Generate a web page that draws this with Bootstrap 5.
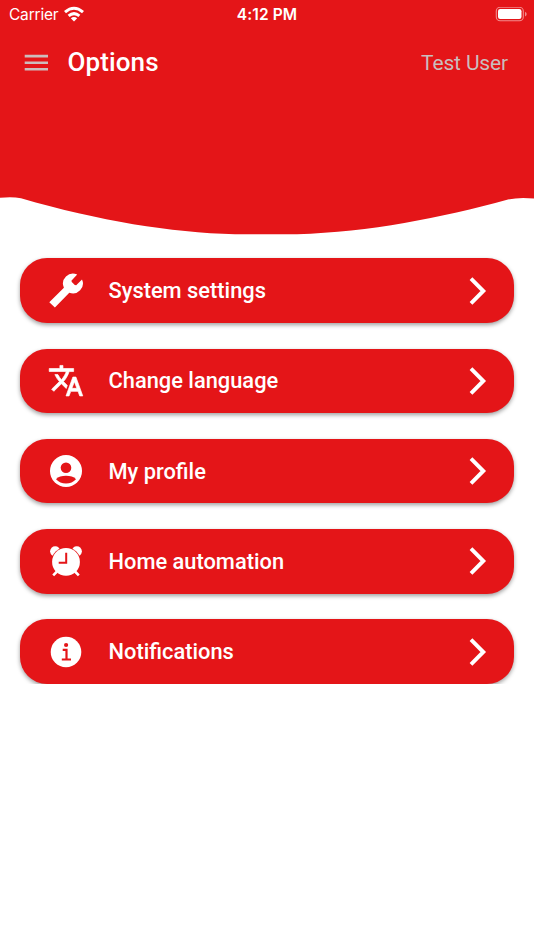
<!DOCTYPE html>
<html lang="en">
<head>
<meta charset="utf-8">
<meta name="viewport" content="width=device-width, initial-scale=1">
<title>Options</title>
<link href="https://cdn.jsdelivr.net/npm/bootstrap@5.3.0/dist/css/bootstrap.min.css" rel="stylesheet">
<style>
body { font-family: Roboto, "Liberation Sans", sans-serif; --brand: #e41518; }
.brand-bg { background: var(--brand); }
.status { height: 28px; padding: 0 7px 0 9px; font-family: Inter, Roboto, sans-serif; font-size: 15.5px; line-height: 28px; }
.carrier { letter-spacing: -.2px; padding-top: 1px; }
.clock { font-weight: 600; font-size: 15.5px; letter-spacing: .1px; margin-right: 2px; padding-top: 1px; }
.app-title { font-size: 26px; font-weight: 500; line-height: 32px; margin: 0 0 2px 18.5px; letter-spacing: .1px; }
.topbar { height: 69px; padding: 0 26px 0 24px; }
.user { font-size: 21px; color: #c9bebe; letter-spacing: -.15px; padding-top: 2px; }
.hero { height: 98px; }
.wave { height: 40px; }
.options { gap: 25.8px; padding: 23.3px 19.7px 0; }
.option { height: 64.5px; border-radius: 27px; padding: 0 27px 0 28.3px; color: #fff; font-size: 21.85px; font-weight: 500; box-shadow: 0 2px 4px rgba(0,0,0,.38); }
.option:hover { color: #fff; }
.option-label { margin-left: 24.5px; line-height: 30px; padding-top: 1px; }
svg { display: block; flex: none; }
</style>
</head>
<body class="bg-white">
<header class="brand-bg text-white">
  <div class="status row g-0 align-items-center">
    <div class="col d-flex align-items-center">
      <span class="carrier">Carrier</span>
      <svg class="ms-1" width="24" height="20" viewBox="62.2 3.8 24 20" fill="none" stroke="#fff" stroke-width="3">
        <path d="M65.2 10.9Q74.2 3.2 83.2 10.9M68.8 14.6Q74.2 10.2 79.6 14.6"/>
        <path d="M71 17.1Q74.2 14.6 77.4 17.1L74.2 20.3Z" fill="#fff" stroke="none"/>
      </svg>
    </div>
    <div class="col-auto clock">4:12 PM</div>
    <div class="col d-flex justify-content-end">
      <svg width="32" height="16" viewBox="495 6 32 16">
        <rect x="496.3" y="6.3" width="27" height="13.4" rx="3.8" fill="none" stroke="#f28b8c" stroke-width="1.1"/>
        <rect x="498" y="8.1" width="23.5" height="9.8" rx="2.2" fill="#fff"/>
        <path d="M525 10.8v4.6q1.7-.6 1.7-2.3T525 10.8z" fill="#f28b8c"/>
      </svg>
    </div>
  </div>
  <nav class="topbar d-flex align-items-center">
    <svg width="25" height="18" viewBox="24 53.5 25 18" fill="none" stroke="#cdbcbc" stroke-width="2.6"><path d="M24.7 55.6H48M24.7 62.2H48M24.7 68.7H48"/></svg>
    <h1 class="app-title">Options</h1>
    <span class="user ms-auto">Test User</span>
  </nav>
  <div class="hero"></div>
</header>
<svg class="wave w-100" viewBox="0 195 534 40" preserveAspectRatio="none"><path fill="#e41518" d="M0 194V197.8Q12 196.4 21 198.2C100 221 170 232.500 235 234.2H297C370 232 440 218 508 199.500Q520 196.800 534 198.600V194Z"/></svg>

<main class="options d-flex flex-column">
  <a href="#" class="option brand-bg d-flex align-items-center text-decoration-none">
    <svg width="36" height="36" viewBox="0 0.5 36 36" fill="#fff"><path d="M1.3 29.7 15.9 15.2A10 10 0 0 1 29.2 2L23.4 8.2 23.8 9.6 26.8 12.500 28.200 12.700 34 6.9A10 10 0 0 1 21.3 20.3L6.9 35Z"/></svg>
    <span class="option-label">System settings</span>
    <svg class="ms-auto" width="20" height="30" viewBox="0 0 20 30" fill="none" stroke="#fff" stroke-width="3.9"><path d="M4 2.7 16.3 15 4 27.3"/></svg>
  </a>
  <a href="#" class="option brand-bg d-flex align-items-center text-decoration-none">
    <svg width="36" height="36" viewBox=".2 .4 23.6 23.6" fill="#fff" stroke="#fff" stroke-width=".45"><path d="M12.87 15.07l-2.54-2.51.03-.03c1.74-1.94 2.98-4.17 3.71-6.53H17V4h-7V2H8v2H1v1.99h11.17C11.5 7.92 10.44 9.75 9 11.35 8.07 10.32 7.3 9.19 6.69 8h-2c.73 1.63 1.73 3.17 2.98 4.56l-5.09 5.02L4 19l5-5 3.11 3.11.76-2.04zM18.5 9.6h-2L12 22h2l1.12-3h4.75L21 22h2l-4.5-12.4zm-2.62 7.4l1.62-4.33L19.12 17h-3.24z"/></svg>
    <span class="option-label">Change language</span>
    <svg class="ms-auto" width="20" height="30" viewBox="0 0 20 30" fill="none" stroke="#fff" stroke-width="3.9"><path d="M4 2.7 16.3 15 4 27.3"/></svg>
  </a>
  <a href="#" class="option brand-bg d-flex align-items-center text-decoration-none">
    <svg width="36" height="36" viewBox="0 0 36 36"><circle cx="18" cy="18" r="16" fill="#fff"/><circle cx="18" cy="14.8" r="5.3" fill="#e41518"/><path d="M8 26.2C10 23.8 14 22.8 18 22.8S26 23.8 28 26.2C25.500 29 22 30.600 18 30.600S10.500 29 8 26.200Z" fill="#e41518"/></svg>
    <span class="option-label">My profile</span>
    <svg class="ms-auto" width="20" height="30" viewBox="0 0 20 30" fill="none" stroke="#fff" stroke-width="3.9"><path d="M4 2.7 16.3 15 4 27.3"/></svg>
  </a>
  <a href="#" class="option brand-bg d-flex align-items-center text-decoration-none">
    <svg width="36" height="36" viewBox="0 0 36 36"><g fill="#fff"><circle cx="7.2" cy="8.300" r="5.100"/><circle cx="28.800" cy="8.300" r="5.100"/></g><circle cx="18" cy="18.900" r="14.600" fill="#e41518"/><path d="M9 28.500 5.200 32.300M27 28.500 30.800 32.300" stroke="#fff" stroke-width="2.600"/><circle cx="18" cy="18.900" r="13.900" fill="#fff"/><path d="M18.200 9.700V19.700H10.700" fill="none" stroke="#e41518" stroke-width="2"/></svg>
    <span class="option-label">Home automation</span>
    <svg class="ms-auto" width="20" height="30" viewBox="0 0 20 30" fill="none" stroke="#fff" stroke-width="3.9"><path d="M4 2.7 16.3 15 4 27.3"/></svg>
  </a>
  <a href="#" class="option brand-bg d-flex align-items-center text-decoration-none">
    <svg width="36" height="36" viewBox="0 0 36 36"><circle cx="18" cy="18" r="15.300" fill="#fff"/><circle cx="18.100" cy="11" r="2.100" fill="#e41518"/><path d="M14.700 15.800H18.500V25.500M13.800 25.500H23" fill="none" stroke="#e41518" stroke-width="2.200"/></svg>
    <span class="option-label">Notifications</span>
    <svg class="ms-auto" width="20" height="30" viewBox="0 0 20 30" fill="none" stroke="#fff" stroke-width="3.9"><path d="M4 2.7 16.3 15 4 27.3"/></svg>
  </a>
</main>
<script src="https://cdn.jsdelivr.net/npm/bootstrap@5.3.0/dist/js/bootstrap.bundle.min.js"></script>
</body>
</html>
